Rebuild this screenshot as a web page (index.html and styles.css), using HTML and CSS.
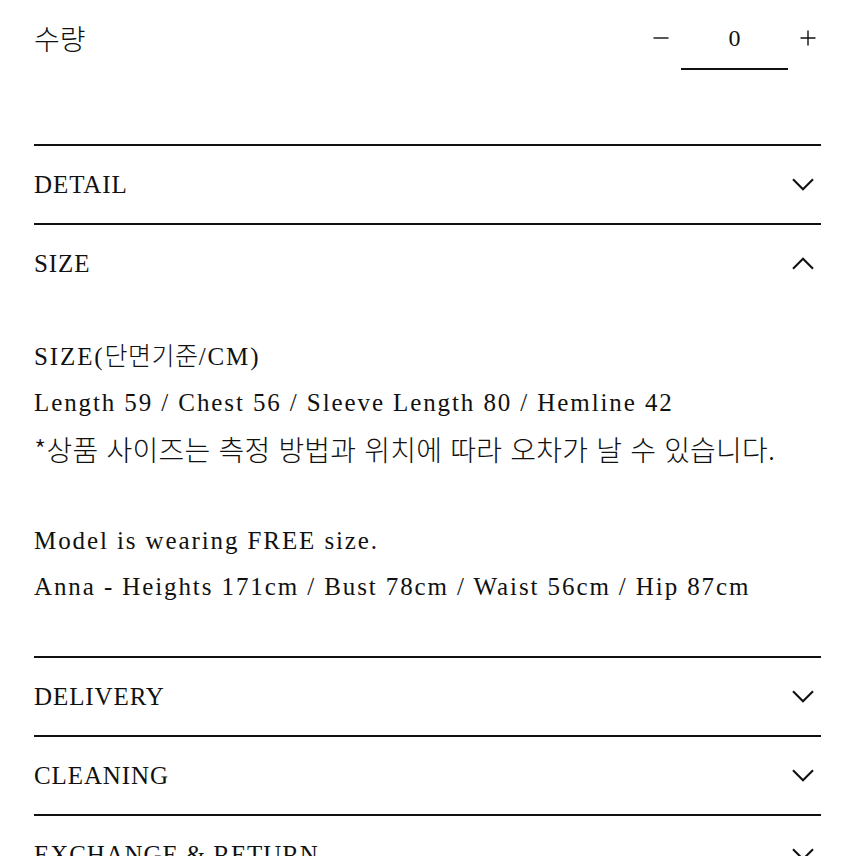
FILE: index.html
```html
<!DOCTYPE html>
<html lang="ko">
<head>
<meta charset="utf-8">
<title>Product info</title>
<link rel="stylesheet" href="styles.css">
</head>
<body>
<div class="page">
  <div class="purchase">
    <div class="qty-label">수량</div>
    <div class="stepper">
      <button class="step-btn" type="button" aria-label="decrease">
        <svg width="16" height="16" viewBox="0 0 16 16"><path d="M0.5 8H15.5" stroke="#111" stroke-width="1.4" fill="none"/></svg>
      </button>
      <div class="qty-value">0</div>
      <button class="step-btn" type="button" aria-label="increase">
        <svg width="16" height="16" viewBox="0 0 16 16"><path d="M0.5 8H15.5M8 0.5V15.5" stroke="#111" stroke-width="1.4" fill="none"/></svg>
      </button>
    </div>
  </div>

  <div class="acc-item">
    <div class="acc-head"><span class="acc-title">DETAIL</span>
      <svg class="chev" width="22" height="13" viewBox="0 0 22 13"><path d="M1 1.2L11 11.2L21 1.2" stroke="#111" stroke-width="2.1" fill="none"/></svg>
    </div>
  </div>

  <div class="acc-item open">
    <div class="acc-head"><span class="acc-title">SIZE</span>
      <svg class="chev" width="22" height="13" viewBox="0 0 22 13"><path d="M1 11.8L11 1.8L21 11.8" stroke="#111" stroke-width="2.1" fill="none"/></svg>
    </div>
    <div class="acc-body">
      <p class="line">SIZE(<span class="ko-inline">단면기준</span>/CM)</p>
      <p class="line">Length 59 / Chest 56 / Sleeve Length 80 / Hemline 42</p>
      <p class="line ko">*상품 사이즈는 측정 방법과 위치에 따라 오차가 날 수 있습니다.</p>
      <p class="line blank">&nbsp;</p>
      <p class="line">Model is wearing FREE size.</p>
      <p class="line">Anna - Heights 171cm / Bust 78cm / Waist 56cm / Hip 87cm</p>
    </div>
  </div>

  <div class="acc-item">
    <div class="acc-head"><span class="acc-title">DELIVERY</span>
      <svg class="chev" width="22" height="13" viewBox="0 0 22 13"><path d="M1 1.2L11 11.2L21 1.2" stroke="#111" stroke-width="2.1" fill="none"/></svg>
    </div>
  </div>

  <div class="acc-item">
    <div class="acc-head"><span class="acc-title">CLEANING</span>
      <svg class="chev" width="22" height="13" viewBox="0 0 22 13"><path d="M1 1.2L11 11.2L21 1.2" stroke="#111" stroke-width="2.1" fill="none"/></svg>
    </div>
  </div>

  <div class="acc-item">
    <div class="acc-head"><span class="acc-title">EXCHANGE &amp; RETURN</span>
      <svg class="chev" width="22" height="13" viewBox="0 0 22 13"><path d="M1 1.2L11 11.2L21 1.2" stroke="#111" stroke-width="2.1" fill="none"/></svg>
    </div>
  </div>
</div>
</body>
</html>
```

FILE: styles.css
```css
html, body {
  margin: 0;
  padding: 0;
  background: #ffffff;
}

body {
  color: #111111;
  font-family: "Liberation Serif", "Noto Sans CJK KR", serif;
  font-variant-numeric: oldstyle-nums;
}

.page {
  padding: 0 35px 0 34px;
  overflow: hidden;
  height: 856px;
  box-sizing: border-box;
}

.purchase {
  display: flex;
  justify-content: space-between;
  align-items: flex-start;
  padding-bottom: 68px;
}

.qty-label {
  font-family: "Noto Sans CJK KR", sans-serif;
  font-size: 28px;
  font-weight: 300;
  line-height: 46px;
  margin-top: 15px;
}

.stepper {
  display: flex;
  align-items: flex-start;
  gap: 7px;
}

.step-btn {
  width: 26px;
  height: 76px;
  padding: 0;
  border: 0;
  background: none;
  display: flex;
  align-items: center;
  justify-content: center;
}

.step-btn svg {
  display: block;
}

.qty-value {
  width: 107px;
  height: 70px;
  box-sizing: border-box;
  border-bottom: 2px solid #111;
  padding-top: 18px;
  line-height: 40px;
  font-size: 24px;
  text-align: center;
}

.acc-item {
  border-top: 2px solid #111;
}

.acc-head {
  height: 77px;
  display: flex;
  align-items: center;
  justify-content: space-between;
}

.acc-title {
  font-size: 25px;
  letter-spacing: 0.9px;
}

.chev {
  display: block;
  margin-right: 7px;
}

.acc-body {
  padding: 32px 0 46px;
}

.line {
  margin: 0;
  font-size: 25px;
  line-height: 46px;
  letter-spacing: 1.9px;
  white-space: nowrap;
}

.ko-inline {
  font-family: "Noto Sans CJK KR", sans-serif;
  font-weight: 300;
  letter-spacing: 0.5px;
  line-height: 1;
}

.line.ko {
  font-family: "Noto Sans CJK KR", sans-serif;
  font-size: 28px;
  font-weight: 300;
  letter-spacing: 0.2px;
}
```
